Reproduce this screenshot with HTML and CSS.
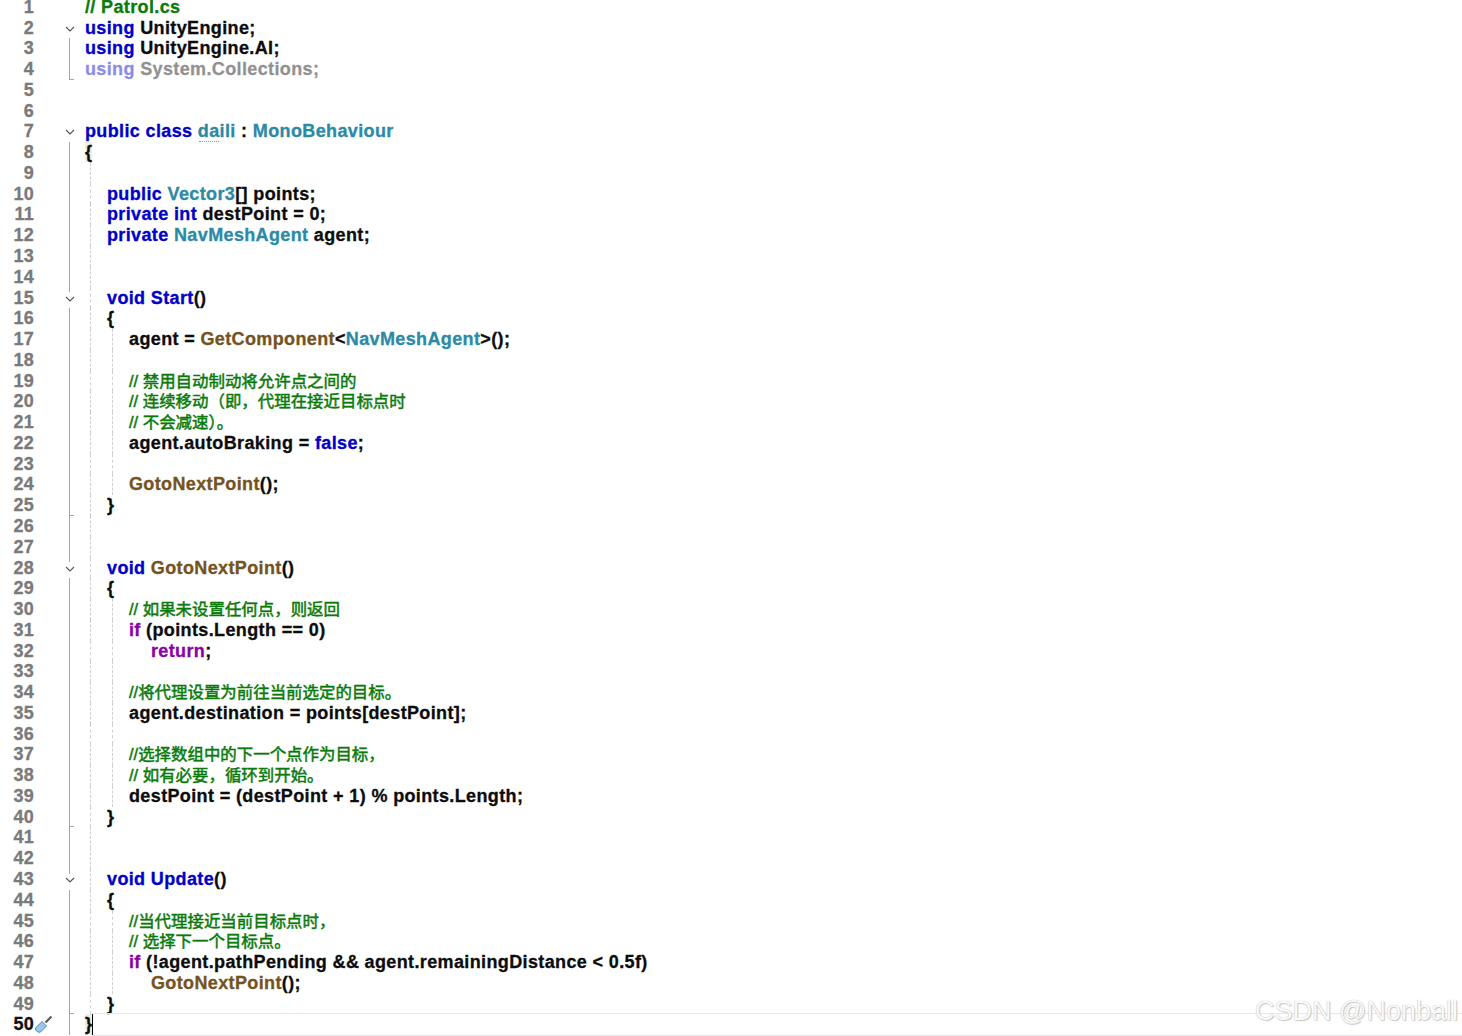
FILE: index.html
```html
<!DOCTYPE html>
<html lang="en">
<head>
<meta charset="utf-8">
<title>Patrol.cs</title>
<link rel="stylesheet" href="styles.css">
</head>
<body>
<main class="editor">
<div class="line"><span class="num">1</span><span class="fold"></span><code class="code"><i class="c">// Patrol.cs</i></code></div>
<div class="line"><span class="num">2</span><span class="fold open"><svg viewBox="0 0 10 6"><path d="M1 1l4 4 4-4"/></svg></span><code class="code"><b>using</b> UnityEngine;</code></div>
<div class="line"><span class="num">3</span><span class="fold bar"></span><code class="code"><b>using</b> UnityEngine.AI;</code></div>
<div class="line"><span class="num">4</span><span class="fold bar end"></span><code class="code dim"><b>using</b> System.Collections;</code></div>
<div class="line"><span class="num">5</span><span class="fold"></span><code class="code"></code></div>
<div class="line"><span class="num">6</span><span class="fold"></span><code class="code"></code></div>
<div class="line"><span class="num">7</span><span class="fold open"><svg viewBox="0 0 10 6"><path d="M1 1l4 4 4-4"/></svg></span><code class="code"><b>public class</b> <u class="t squiggle">daili</u> : <u class="t">MonoBehaviour</u></code></div>
<div class="line"><span class="num">8</span><span class="fold bar"></span><code class="code"><span class="brace">{</span></code></div>
<div class="line"><span class="num">9</span><span class="fold bar"></span><code class="code g1"></code></div>
<div class="line"><span class="num">10</span><span class="fold bar"></span><code class="code g1"><span class="i1"><b>public</b> <u class="t">Vector3</u>[] points;</span></code></div>
<div class="line"><span class="num">11</span><span class="fold bar"></span><code class="code g1"><span class="i1"><b>private int</b> destPoint = 0;</span></code></div>
<div class="line"><span class="num">12</span><span class="fold bar"></span><code class="code g1"><span class="i1"><b>private</b> <u class="t">NavMeshAgent</u> agent;</span></code></div>
<div class="line"><span class="num">13</span><span class="fold bar"></span><code class="code g1"></code></div>
<div class="line"><span class="num">14</span><span class="fold bar"></span><code class="code g1"></code></div>
<div class="line"><span class="num">15</span><span class="fold bar open"><svg viewBox="0 0 10 6"><path d="M1 1l4 4 4-4"/></svg></span><code class="code g1"><span class="i1"><b>void</b> <b>Start</b>()</span></code></div>
<div class="line"><span class="num">16</span><span class="fold bar"></span><code class="code g1"><span class="i1">{</span></code></div>
<div class="line"><span class="num">17</span><span class="fold bar"></span><code class="code g2"><span class="i2">agent = <u class="m">GetComponent</u>&lt;<u class="t">NavMeshAgent</u>&gt;();</span></code></div>
<div class="line"><span class="num">18</span><span class="fold bar"></span><code class="code g2"></code></div>
<div class="line"><span class="num">19</span><span class="fold bar"></span><code class="code g2"><span class="i2"><i class="c zh">// 禁用自动制动将允许点之间的</i></span></code></div>
<div class="line"><span class="num">20</span><span class="fold bar"></span><code class="code g2"><span class="i2"><i class="c zh">// 连续移动（即，代理在接近目标点时</i></span></code></div>
<div class="line"><span class="num">21</span><span class="fold bar"></span><code class="code g2"><span class="i2"><i class="c zh">// 不会减速）。</i></span></code></div>
<div class="line"><span class="num">22</span><span class="fold bar"></span><code class="code g2"><span class="i2">agent.autoBraking = <b>false</b>;</span></code></div>
<div class="line"><span class="num">23</span><span class="fold bar"></span><code class="code g2"></code></div>
<div class="line"><span class="num">24</span><span class="fold bar"></span><code class="code g2"><span class="i2"><u class="m">GotoNextPoint</u>();</span></code></div>
<div class="line"><span class="num">25</span><span class="fold bar end"></span><code class="code g1"><span class="i1">}</span></code></div>
<div class="line"><span class="num">26</span><span class="fold bar"></span><code class="code g1"></code></div>
<div class="line"><span class="num">27</span><span class="fold bar"></span><code class="code g1"></code></div>
<div class="line"><span class="num">28</span><span class="fold bar open"><svg viewBox="0 0 10 6"><path d="M1 1l4 4 4-4"/></svg></span><code class="code g1"><span class="i1"><b>void</b> <u class="m">GotoNextPoint</u>()</span></code></div>
<div class="line"><span class="num">29</span><span class="fold bar"></span><code class="code g1"><span class="i1">{</span></code></div>
<div class="line"><span class="num">30</span><span class="fold bar"></span><code class="code g2"><span class="i2"><i class="c zh">// 如果未设置任何点，则返回</i></span></code></div>
<div class="line"><span class="num">31</span><span class="fold bar"></span><code class="code g2"><span class="i2"><em class="k">if</em> (points.Length == 0)</span></code></div>
<div class="line"><span class="num">32</span><span class="fold bar"></span><code class="code g3"><span class="i3"><em class="k">return</em>;</span></code></div>
<div class="line"><span class="num">33</span><span class="fold bar"></span><code class="code g2"></code></div>
<div class="line"><span class="num">34</span><span class="fold bar"></span><code class="code g2"><span class="i2"><i class="c zh">//将代理设置为前往当前选定的目标。</i></span></code></div>
<div class="line"><span class="num">35</span><span class="fold bar"></span><code class="code g2"><span class="i2">agent.destination = points[destPoint];</span></code></div>
<div class="line"><span class="num">36</span><span class="fold bar"></span><code class="code g2"></code></div>
<div class="line"><span class="num">37</span><span class="fold bar"></span><code class="code g2"><span class="i2"><i class="c zh">//选择数组中的下一个点作为目标，</i></span></code></div>
<div class="line"><span class="num">38</span><span class="fold bar"></span><code class="code g2"><span class="i2"><i class="c zh">// 如有必要，循环到开始。</i></span></code></div>
<div class="line"><span class="num">39</span><span class="fold bar"></span><code class="code g2"><span class="i2">destPoint = (destPoint + 1) % points.Length;</span></code></div>
<div class="line"><span class="num">40</span><span class="fold bar end"></span><code class="code g1"><span class="i1">}</span></code></div>
<div class="line"><span class="num">41</span><span class="fold bar"></span><code class="code g1"></code></div>
<div class="line"><span class="num">42</span><span class="fold bar"></span><code class="code g1"></code></div>
<div class="line"><span class="num">43</span><span class="fold bar open"><svg viewBox="0 0 10 6"><path d="M1 1l4 4 4-4"/></svg></span><code class="code g1"><span class="i1"><b>void</b> <b>Update</b>()</span></code></div>
<div class="line"><span class="num">44</span><span class="fold bar"></span><code class="code g1"><span class="i1">{</span></code></div>
<div class="line"><span class="num">45</span><span class="fold bar"></span><code class="code g2"><span class="i2"><i class="c zh">//当代理接近当前目标点时，</i></span></code></div>
<div class="line"><span class="num">46</span><span class="fold bar"></span><code class="code g2"><span class="i2"><i class="c zh">// 选择下一个目标点。</i></span></code></div>
<div class="line"><span class="num">47</span><span class="fold bar"></span><code class="code g2"><span class="i2"><em class="k">if</em> (!agent.pathPending &amp;&amp; agent.remainingDistance &lt; 0.5f)</span></code></div>
<div class="line"><span class="num">48</span><span class="fold bar"></span><code class="code g3"><span class="i3"><u class="m">GotoNextPoint</u>();</span></code></div>
<div class="line"><span class="num">49</span><span class="fold bar end"></span><code class="code g1"><span class="i1">}</span></code></div>
<div class="line current"><span class="num now">50<svg class="brush" viewBox="0 0 18 18"><path class="bristle" d="M1 12.5l6-6 4.5 4.5-6 6q-2 1-4-1t-.5-3.5z"/><path class="handle" d="M10.5 7.5l6-6"/></svg></span><span class="fold bar"></span><code class="code"><span class="brace">}</span><span class="caret"></span></code></div>
</main>
<div class="mark">CSDN @Nonball</div>
</body>
</html>
```
FILE: styles.css
```css
html, body { margin: 0; height: 1036px; overflow: hidden; background: #fff; }
body { position: relative; }
.editor { font: bold 18px/20.78px "Liberation Sans", "Noto Sans CJK SC", sans-serif; color: #0c0c0c; letter-spacing: .37px; -webkit-text-stroke-width: .3px; }
.line { display: flex; height: 20.78px; }
.line:first-child { height: 17.6px; line-height: 15px; }
.num { width: 34px; flex: none; position: relative; text-align: right; color: #7a7a7a; letter-spacing: .2px; }
.now { color: #111; }
.brush { position: absolute; left: 35px; top: 1px; width: 18px; height: 18px; }
.bristle { fill: #9cc6ea; stroke: #4d86b8; stroke-width: 1; }
.handle { stroke: #5a5a5a; stroke-width: 2.2; fill: none; }
.fold { width: 51px; flex: none; position: relative; }
.fold svg { position: absolute; left: 30.5px; top: 8px; width: 10px; height: 6px; fill: none; stroke: #555; stroke-width: 1.1; }
.bar::before { content: ""; position: absolute; left: 35px; top: 0; bottom: 0; border-left: 1px solid #a5a5a5; }
.bar.open::before { bottom: 16px; }
.end::after { content: ""; position: absolute; left: 35px; bottom: 0; width: 5px; border-bottom: 1px solid #a5a5a5; }
.code { flex: 1; font: inherit; white-space: pre; position: relative; }
.code b { color: #0000c8; font-weight: bold; }
.code i.c { color: #0a7a0a; font-style: normal; }
.code i.zh { font-size: 16.46px; font-weight: normal; letter-spacing: 0; -webkit-text-stroke-width: .5px; }
.code em.k { color: #8a00a8; font-style: normal; }
.code u { text-decoration: none; }
.t { color: #2b8aa6; }
.m { color: #74531f; }
.squiggle { position: relative; }
.squiggle::after { content: ""; position: absolute; left: 1px; bottom: -1px; width: 20px; border-bottom: 1px dotted #999; }
.dim { opacity: .45; }
.brace { background: #f0efe6; }
.i1 { margin-left: 22px; }
.i2 { margin-left: 44px; }
.i3 { margin-left: 66px; }
.g1::before, .g2::before, .g3::before { content: ""; position: absolute; left: 5px; top: 0; bottom: 0; border-left: 1px dashed #cfcfcf; }
.g2::after, .g3::after { content: ""; position: absolute; left: 26.5px; top: 0; bottom: 0; border-left: 1px dashed #cfcfcf; }
.current .code { display: flex; }
.caret { flex: 1; height: 20.78px; box-sizing: border-box; border-left: 1px solid #000; box-shadow: 0 -1px 0 #e6e6ee, 0 1px 0 #e6e6ee; }
.mark { position: absolute; right: 4px; bottom: 9px; font: 27px/32px "Liberation Sans", sans-serif; color: #fafafa; text-shadow: 0 0 1px #a8a8a8, 1px 1px 1px #ccc; }
```
